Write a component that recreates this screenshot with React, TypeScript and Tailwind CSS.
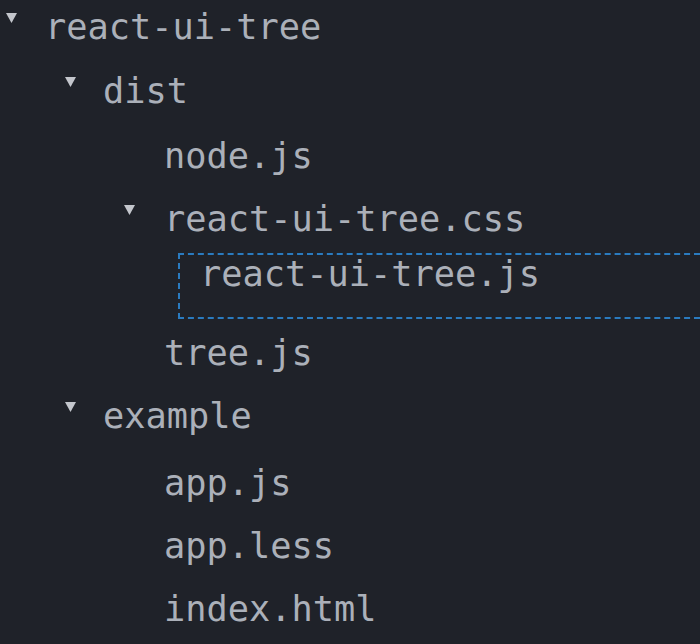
import React from 'react';

interface Row {
    name: string;
    left: number;
    caret?: number;
    top: number;
}

// file tree rows, positions taken from the screenshot
const rows: Row[] = [
    { name: 'react-ui-tree', left: 45, caret: 6, top: 0 },
    { name: 'dist', left: 103, caret: 65, top: 64 },
    { name: 'node.js', left: 164, top: 129 },
    { name: 'react-ui-tree.css', left: 164, caret: 124, top: 192 },
];

const rest: Row[] = [
    { name: 'tree.js', left: 164, top: 326 },
    { name: 'example', left: 103, caret: 65, top: 389 },
    { name: 'app.js', left: 164, top: 456 },
    { name: 'app.less', left: 164, top: 519 },
    { name: 'index.html', left: 164, top: 582 },
];

function Caret() {
    return (
        <svg width="11" height="11" viewBox="0 0 11 11" className="shrink-0">
            <polygon points="0,1 11,1 5.5,11" fill="#c3c6cc" />
        </svg>
    );
}

function TreeRow({ row }: { row: Row }) {
    return (
        <div className="relative h-full">
            {row.caret !== undefined && (
                <div className="absolute top-[12px]" style={{ left: row.caret }}>
                    <Caret />
                </div>
            )}
            <div className="absolute top-0 leading-[54px]" style={{ left: row.left }}>
                {row.name}
            </div>
        </div>
    );
}

export default function App() {
    return (
        <div
            className="w-[700px] h-[644px] overflow-hidden bg-[#1f2229] text-[#abb0b9] text-[35.3px]"
            style={{ fontFamily: '"DejaVu Sans Mono", "Liberation Mono", monospace' }}
        >
            <div className="h-[64px]"><TreeRow row={rows[0]} /></div>
            <div className="h-[65px]"><TreeRow row={rows[1]} /></div>
            <div className="h-[63px]"><TreeRow row={rows[2]} /></div>
            <div className="h-[61px]"><TreeRow row={rows[3]} /></div>

            {/* drop placeholder */}
            <div className="ml-[178px] h-[66px] border-2 border-dashed border-[#2a7bbf] border-r-0 pl-[20px] leading-[38px]">
                react-ui-tree.js
            </div>

            <div className="mt-[7px] h-[63px]"><TreeRow row={rest[0]} /></div>
            <div className="h-[67px]"><TreeRow row={rest[1]} /></div>
            <div className="h-[63px]"><TreeRow row={rest[2]} /></div>
            <div className="h-[63px]"><TreeRow row={rest[3]} /></div>
            <div className="h-[63px]"><TreeRow row={rest[4]} /></div>
        </div>
    );
}
